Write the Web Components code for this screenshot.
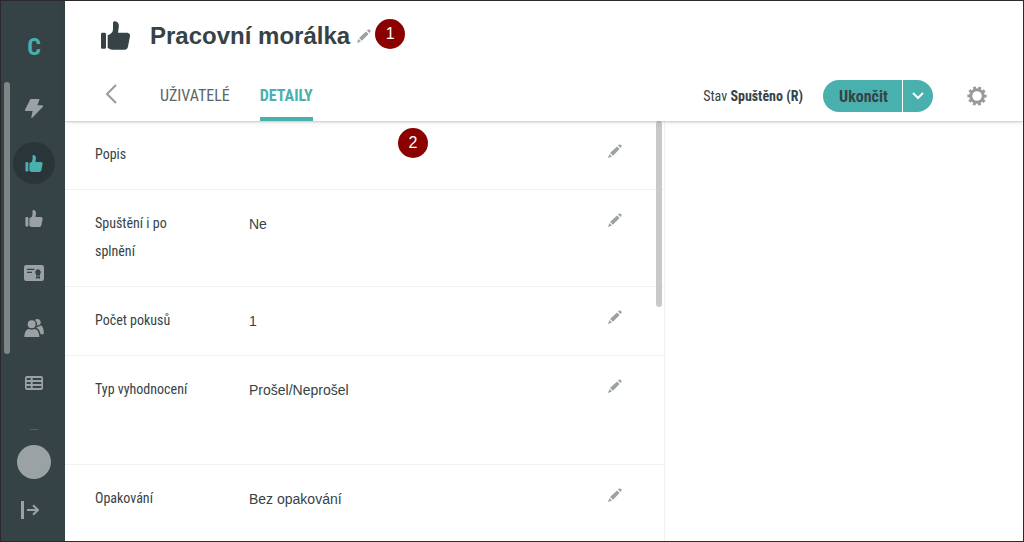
<!DOCTYPE html>
<html lang="cs">
<head>
<meta charset="utf-8">
<meta name="viewport" content="width=device-width, initial-scale=1">
<title>Pracovní morálka</title>
<style>
  :root {
    --ink: #364346;
    --teal: #49b0ae;
    --muted: #9aa2a4;
    --line: #f0f1f1;
    --condensed: "Roboto Condensed", "Liberation Sans Narrow", "Roboto", sans-serif;
    --plain: "Liberation Sans", Arial, sans-serif;
  }
  * { box-sizing: border-box; }
  body { margin: 0; color: var(--ink); background: #fff; font: 14px/28px var(--plain); }
</style>
</head>
<body>
<app-shell>
  <side-bar slot="side"></side-bar>
  <page-header slot="header" heading="Pracovní morálka"></page-header>
  <detail-panel>
    <detail-row label="Popis"></detail-row>
    <detail-row label="Spuštění i po splnění">Ne</detail-row>
    <detail-row label="Počet pokusů">1</detail-row>
    <detail-row label="Typ vyhodnocení" tall>Prošel/Neprošel</detail-row>
    <detail-row label="Opakování" tall>Bez opakování</detail-row>
    <note-badge slot="note">2</note-badge>
  </detail-panel>
</app-shell>

<script>
const ICONS = {
  thumb: ['0 0 87 86', '<rect y="35" width="15" height="48" rx="4"/><path d="M36 5C36 0 43-1 47 2C54 6 54 12 53 20L51 35H79Q88 36 87 45L81 76Q79 86 70 86H34Q27 86 20 80V42Q36 36 36 24Z"/>'],
  bolt: ['0 0 54 57', '<path d="M15 2Q16 0 18 0H41Q44 0 43 3L37 19H51Q56 20 53 24L22 56Q18 58 19 54L23 36H2Q-1 35 0 32Z"/>'],
  card: ['0 0 60 48', '<path fill-rule="evenodd" d="M7 0H53Q60 0 60 7V41Q60 48 53 48H7Q0 48 0 41V7Q0 0 7 0ZM9 11V15H31V11ZM9 20V24H24V20ZM42 13A9 9 0 0 0 36 28V42L42 39L48 42V28A9 9 0 0 0 42 13Z"/><rect x="36" y="32" width="12" height="2"/>'],
  people: ['0 0 58 54', '<circle cx="22" cy="16" r="12"/><path d="M0 54C0 40 6 30 14 30Q22 35 30 30C39 30 45 40 45 54Z"/><path d="M32 3A10 10 0 1 1 39 20Q40 10 32 3ZM39 23Q46 24 50 19C57 24 59 34 58 46H49C47 36 44 30 36 26Z"/>'],
  table: ['0 0 54 42', '<path fill-rule="evenodd" d="M6 0H48Q54 0 54 6V36Q54 42 48 42H6Q0 42 0 36V6Q0 0 6 0ZM5 6V12H17V6ZM23 6V12H49V6ZM5 18V24H17V18ZM23 18V24H49V18ZM5 30V36H17V30ZM23 30V36H49V30Z"/>'],
  exit: ['0 0 54 54', '<path d="M0 0H9V54H0Z"/><path d="M18 27H52M36 13L51 27L36 41" fill="none" stroke="currentColor" stroke-width="6"/>'],
  pencil: ['0 0 14 14', '<path d="M2 9L9 2.4L11.6 5L5 11.8ZM10 1.5L11 .6Q12 0 13 1Q14 2 13.4 3L12.5 4ZM1.4 10L4 12.6L0 14Z"/>'],
  back: ['0 0 12 20', '<path d="M11 1L2 10L11 19" fill="none" stroke="currentColor" stroke-width="2"/>'],
  down: ['0 0 12 8', '<path d="M1 1L6 6L11 1" fill="none" stroke="currentColor" stroke-width="2"/>'],
  gear: ['0 0 20 20', '<circle cx="10" cy="10" r="6.3" fill="none" stroke="currentColor" stroke-width="3"/><circle cx="10" cy="10" r="8.3" fill="none" stroke="currentColor" stroke-width="2.6" pathLength="200" stroke-dasharray="11 9" stroke-dashoffset="5"/>']
};

class Base extends HTMLElement {
  render(html) {
    const t = document.createElement('template');
    t.innerHTML = '<style>*{box-sizing:border-box}button{border:0;padding:0;margin:0;background:none;color:inherit;font:inherit;cursor:pointer}a{color:inherit;text-decoration:none}</style>' + html;
    this.attachShadow({ mode: 'open' }).append(t.content.cloneNode(true));
  }
}

customElements.define('ui-icon', class extends Base {
  connectedCallback() {
    const [box, art] = ICONS[this.getAttribute('name')];
    this.render(`<style>:host{display:block;flex:none}svg{display:block;width:100%;height:100%;fill:currentColor}</style>
      <svg viewBox="${box}" aria-hidden="true">${art}</svg>`);
  }
});

customElements.define('note-badge', class extends Base {
  connectedCallback() {
    this.render(`<style>:host{display:block;flex:none;width:30px;height:30px;border-radius:50%;background:#8b0000;color:#fff;font:16px/30px var(--plain);text-align:center}</style><slot></slot>`);
  }
});

customElements.define('app-shell', class extends Base {
  connectedCallback() {
    this.render(`<style>
      :host{display:flex;height:100vh;border:1px solid #2b292c;overflow:hidden}
      ::slotted([slot=side]){flex:none}
      .main{flex:1;min-width:0;display:flex;flex-direction:column}
      main{flex:1;min-height:0;display:flex}
    </style>
    <slot name="side"></slot>
    <div class="main"><slot name="header"></slot><main><slot></slot></main></div>`);
  }
});

customElements.define('side-bar', class extends Base {
  connectedCallback() {
    const items = [['bolt','Aktivity',18,19],['thumb','Hodnocení',18,17,1],['thumb','Kompetence',18,17],['card','Certifikáty',20,16],['people','Lidé',20,18],['table','Přehledy',18,14]];
    this.render(`<style>
      :host{display:flex;flex-direction:column;align-items:center;width:64px;padding-left:2px;background:var(--ink);color:var(--muted);position:relative}
      .logo{flex:none;margin-top:32px;font:bold 24px/28px var(--condensed);color:var(--teal)}
      nav{flex:none;margin-top:19px}
      nav a{display:flex;align-items:center;justify-content:center;width:42px;height:42px;margin:7px 0 13px;border-radius:50%}
      nav a.on{background:#2a3539;color:var(--teal)}
      hr{width:8px;height:1px;border:0;margin:auto 0 15px;background:#566366}
      .avatar{flex:none;width:34px;height:34px;border-radius:50%;background:var(--muted)}
      .exit{margin:22px 8px 22px 0}
      .thumb{position:absolute;left:3px;top:15%;bottom:187px;width:6px;border-radius:3px;background:#7e8688}
    </style>
    <a class="logo" href="#">C</a>
    <nav aria-label="Hlavní nabídka">${items.map(([n,l,w,h,on]) => `<a href="#" aria-label="${l}"${on ? ' class="on" aria-current="page"' : ''}><ui-icon name="${n}" style="width:${w}px;height:${h}px"></ui-icon></a>`).join('')}</nav>
    <hr>
    <button class="avatar" aria-label="Můj profil"></button>
    <button class="exit" aria-label="Odhlásit"><ui-icon name="exit" style="width:18px;height:18px"></ui-icon></button>
    <div class="thumb"></div>`);
  }
});

customElements.define('split-button', class extends Base {
  connectedCallback() {
    this.render(`<style>
      :host{display:flex;gap:1px;height:32px;border-radius:16px;overflow:hidden;font:bold 16px/32px var(--condensed);color:var(--ink)}
      button{background:var(--teal)}
      .go{padding:1px 16px 0;width:79px}
      .more{width:30px;display:grid;place-items:center;color:#fff}
    </style>
    <button class="go"><slot></slot></button>
    <button class="more" aria-label="Další možnosti"><ui-icon name="down" style="width:12px;height:8px"></ui-icon></button>`);
  }
});

customElements.define('page-header', class extends Base {
  connectedCallback() {
    this.render(`<style>
      :host{display:block;position:relative;z-index:1;background:#fff;box-shadow:0 1px 2px rgba(0,0,0,.2),0 2px 8px rgba(0,0,0,.06)}
      .title{display:flex;align-items:center;height:70px;padding-left:36px}
      .title > ui-icon{margin-bottom:2px}
      h1{margin:0 7px 0 20px;font:bold 24px/28px var(--plain)}
      .edit{color:var(--muted)}
      note-badge{margin:-4px 0 0 4px}
      .bar{display:flex;height:50px;padding:0 36px 0 40px;align-items:center}
      .back{color:#999;margin:-4px 43px 0 0}
      nav{display:flex;align-self:stretch;gap:30px;font:16px/50px var(--condensed);color:#5b6669;flex:1}
      nav a.on{font-weight:bold;color:var(--teal);border-bottom:4px solid currentColor}
      .state{font:14px/28px var(--condensed);margin-right:20px}
      split-button{margin-right:34px}
      .gear{color:#999}
    </style>
    <div class="title">
      <ui-icon name="thumb" style="width:29px;height:29px"></ui-icon>
      <h1>${this.getAttribute('heading')}</h1>
      <button class="edit" aria-label="Upravit název"><ui-icon name="pencil" style="width:14px;height:14px"></ui-icon></button>
      <note-badge>1</note-badge>
    </div>
    <div class="bar">
      <button class="back" aria-label="Zpět"><ui-icon name="back" style="width:12px;height:20px"></ui-icon></button>
      <nav><a href="#">UŽIVATELÉ</a><a href="#" class="on" aria-current="page">DETAILY</a></nav>
      <span class="state">Stav <b>Spuštěno (R)</b></span>
      <split-button>Ukončit</split-button>
      <button class="gear" aria-label="Nastavení"><ui-icon name="gear" style="width:20px;height:20px"></ui-icon></button>
    </div>`);
  }
});

customElements.define('detail-panel', class extends Base {
  connectedCallback() {
    this.render(`<style>
      :host{display:block;flex:0 1 600px;position:relative;border-right:1px solid var(--line)}
      .list{height:100%;overflow:hidden}
      ::slotted([slot=note]){position:absolute;left:333px;top:7px}
      .thumb{position:absolute;right:2px;top:0;width:6px;height:186px;border-radius:3px;background:#c9c9c9}
    </style>
    <div class="list"><slot></slot></div><slot name="note"></slot><div class="thumb"></div>`);
  }
});

customElements.define('detail-row', class extends Base {
  connectedCallback() {
    this.render(`<style>
      :host{display:grid;grid-template-columns:104px 1fr 14px;column-gap:50px;padding:19px 42px 21px 30px;border-bottom:1px solid var(--line)}
      :host([tall]){padding-bottom:61px}
      .label{font-family:var(--condensed)}
      .value{padding-top:1px;margin-bottom:-1px}
      button{align-self:start;color:var(--muted);margin-top:4px}
    </style>
    <span class="label" id="l">${this.getAttribute('label')}</span>
    <span class="value" aria-labelledby="l"><slot></slot></span>
    <button aria-label="Upravit: ${this.getAttribute('label')}"><ui-icon name="pencil" style="width:14px;height:14px"></ui-icon></button>`);
  }
});
</script>
</body>
</html>
